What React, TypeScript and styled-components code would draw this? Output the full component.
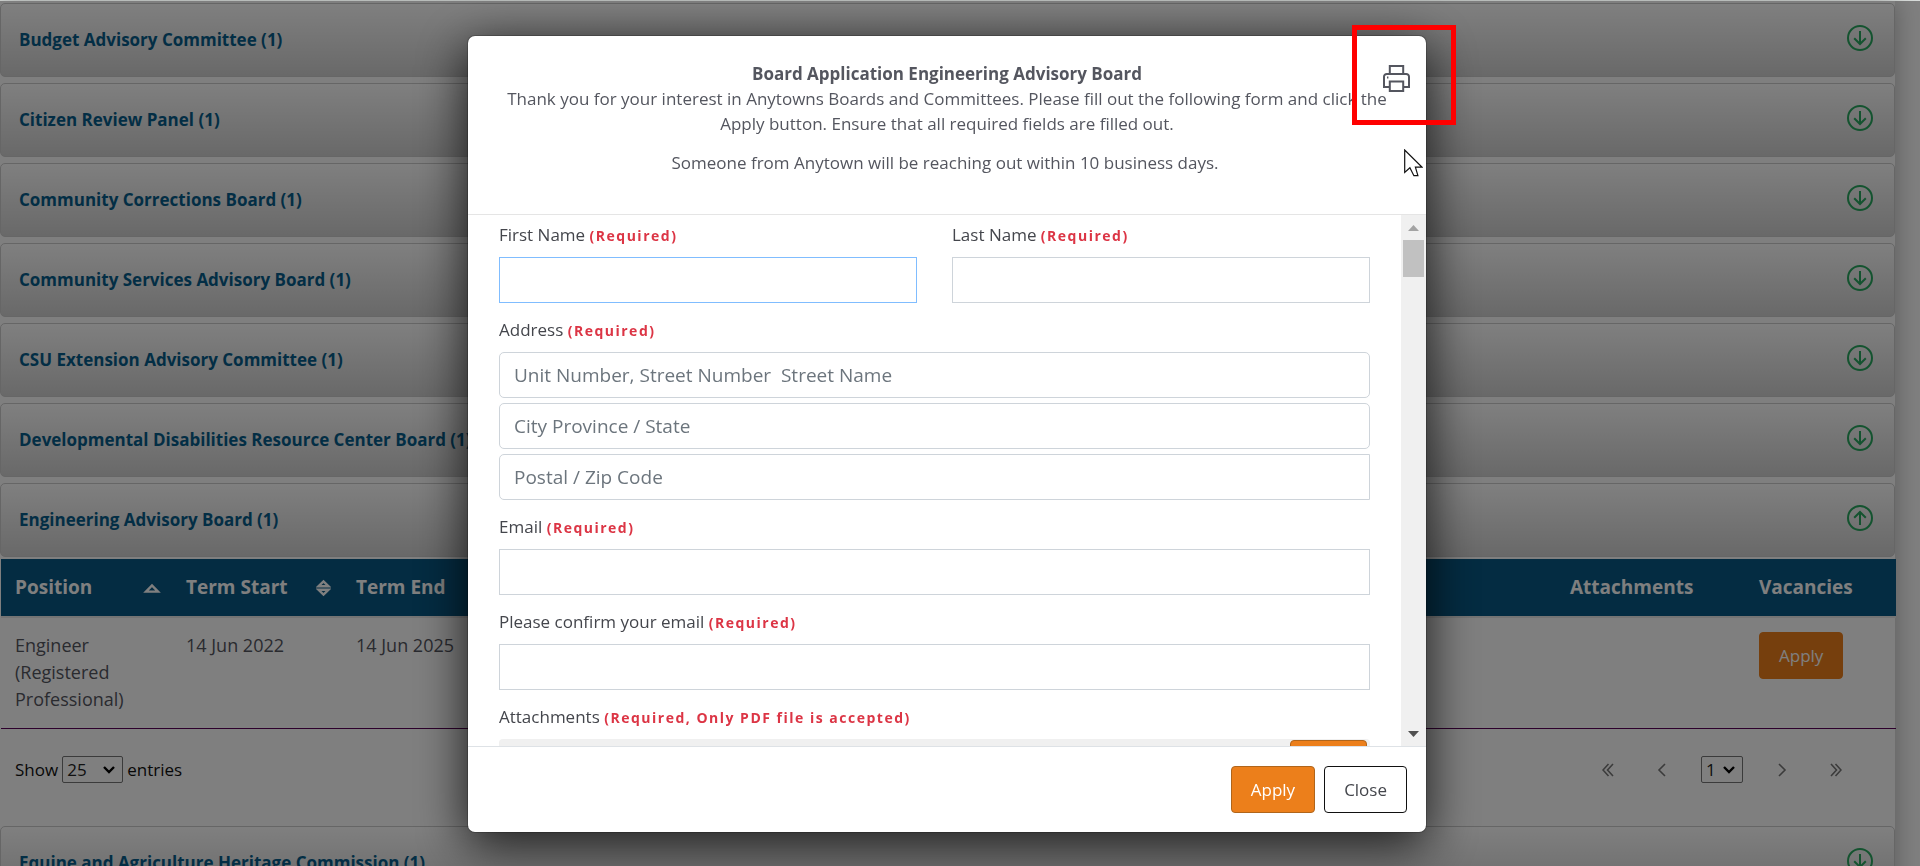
import React from 'react';
import styled, { createGlobalStyle, css } from 'styled-components';

const GlobalStyle = createGlobalStyle`
  *, *::before, *::after { box-sizing: border-box; }
  html, body { height: 100%; margin: 0; overflow: hidden; }
  body {
    background: #fff;
    color: #54565f;
    font-family: "Open Sans", "Noto Sans", sans-serif;
    font-size: 17px;
    line-height: 25px;
  }
  button, input, select { font-family: inherit; font-size: inherit; }
`;

/* ---------- Page behind the dialog ---------- */

const Page = styled.main`
  border-top: 1px solid #d8dcda;
  padding-right: 25px;
`;

const Content = styled.div`
  display: flex;
  flex-direction: column;
  gap: 6px;
  padding-top: 2px;
  background: #fff;
  box-shadow: 0 0 24px rgba(0, 0, 0, 0.3);
`;

const Board = styled.section``;

const BoardHeader = styled.button`
  display: flex;
  align-items: center;
  justify-content: space-between;
  width: 100%;
  height: 74px;
  padding: 0 21px 2px 18px;
  border: 1px solid #ccc;
  border-radius: 5px;
  background: linear-gradient(#fff, #d2d2d2);
  color: #065d8a;
  font-weight: 660;
  text-align: left;
  cursor: pointer;
`;

const ToggleIcon = styled.svg<{ $open?: boolean }>`
  width: 26px;
  height: 26px;
  margin-bottom: 2px;
  fill: none;
  stroke: #28a75f;
  stroke-width: 2;
  transform: ${(p) => (p.$open ? 'rotate(180deg)' : 'none')};
`;

const VacancyTable = styled.table`
  width: 100%;
  margin: 2px 0 0 1px;
  border-collapse: collapse;
  border-bottom: 1px solid #5a0058;
  table-layout: fixed;
  font-size: 18px;
  line-height: 27px;
`;

const HeadCell = styled.th`
  height: 58px;
  padding: 0 11px 0 14px;
  background: #085884;
  color: #fff;
  font-size: 19px;
  font-weight: 700;
  text-align: left;
`;

const HeadContent = styled.div`
  display: flex;
  align-items: center;
  justify-content: space-between;
`;

const Cell = styled.td`
  padding: 14px 14px 15px;
  border-top: 2px solid #e8e8e8;
  vertical-align: top;
`;

const SortIcon = styled.svg`
  fill: none;
  stroke: #fff;
  stroke-width: 2.4;
`;

const TableFooter = styled.div`
  display: flex;
  align-items: center;
  justify-content: space-between;
  height: 91px;
  padding: 0 32px 10px 15px;
  color: #111;
`;

const EntriesLabel = styled.label`
  display: flex;
  align-items: center;
  gap: 4px;
`;

const SelectBox = styled.span`
  position: relative;
  display: flex;

  svg {
    position: absolute;
    top: 10px;
    right: 8px;
    fill: none;
    stroke: #000;
    stroke-width: 2.4;
    pointer-events: none;
  }
`;

const Select = styled.select<{ $wide?: boolean }>`
  appearance: none;
  width: ${(p) => (p.$wide ? 61 : 42)}px;
  height: 27px;
  padding: 0 4px;
  border: 1px solid #767676;
  border-radius: 2px;
  background: transparent;
  color: #222;
`;

const Pager = styled.nav`
  display: flex;
  align-items: center;
`;

const PagerCurrent = styled.div`
  margin: 0 12px;
`;

const PageButton = styled.button`
  display: flex;
  justify-content: center;
  width: 54px;
  padding: 8px 0;
  border: 0;
  background: none;
  cursor: pointer;

  svg { fill: none; stroke: #777; stroke-width: 1.6; }
`;

/* ---------- Buttons ---------- */

const Button = styled.button<{ $outline?: boolean; $flat?: boolean }>`
  height: 47px;
  padding: 0 19px;
  border: 1px solid #b0651b;
  border-radius: 4px;
  background: #ec7f1b;
  color: #fff;
  font-size: 17px;
  cursor: pointer;

  ${(p) => p.$flat && css`border-color: #ec7f1b;`}
  ${(p) => p.$outline && css`
    border-color: #111;
    background: #fff;
    color: #44464c;
  `}
`;

/* ---------- Dialog ---------- */

const Overlay = styled.div`
  position: fixed;
  inset: 1px 0 0 0;
  display: flex;
  justify-content: center;
  padding: 34px 26px 33px 0;
  background: rgba(0, 0, 0, 0.5);
`;

const Dialog = styled.div`
  position: relative;
  display: flex;
  flex-direction: column;
  width: 960px;
  max-width: 100%;
  border: 1px solid rgba(0, 0, 0, 0.2);
  border-radius: 8px;
  background: #fff;
  background-clip: padding-box;
  box-shadow: 0 12px 50px rgba(0, 0, 0, 0.8);
`;

const DialogHeader = styled.header`
  padding: 25px 30px 39px;
  border-bottom: 1px solid #e5e5e5;
  text-align: center;
`;

const DialogTitle = styled.h2`
  margin: 0;
  font-size: 17px;
  line-height: 25px;
  font-weight: 700;
`;

const Intro = styled.p`
  margin: 0 0 14px;

  &:last-child { margin: 0 4px 0 0; }
`;

const PrintButton = styled.button`
  position: absolute;
  top: 29px;
  right: 16px;
  display: flex;
  padding: 0;
  border: 0;
  background: none;
  cursor: pointer;

  svg { fill: none; stroke: #54565f; stroke-width: 2; }
`;

const DialogBody = styled.div`
  display: flex;
  flex: 1;
  min-height: 0;
`;

const Form = styled.form`
  display: flex;
  flex: 1;
  flex-direction: column;
  gap: 14px;
  padding: 7px 31px 0;
  overflow-y: auto;
  scrollbar-width: none;
`;

const FieldPair = styled.div`
  display: grid;
  grid-template-columns: 1fr 1fr;
  gap: 35px;
`;

const Field = styled.div`
  display: flex;
  flex-direction: column;
  gap: 5px;
`;

const Label = styled.label`
  margin-bottom: 4px;
  color: #44464c;
  line-height: 26px;
`;

const Required = styled.span`
  color: #dc3545;
  font-size: 14px;
  font-weight: 700;
  letter-spacing: 1.5px;
  line-height: 14px;
`;

const TextInput = styled.input<{ $active?: boolean; $corners?: string }>`
  width: 100%;
  height: 46px;
  padding: 0 14px;
  border: 1px solid ${(p) => (p.$active ? '#80bdff' : '#ced4da')};
  border-radius: ${(p) => p.$corners || '0'};
  background: #fff;
  color: #495057;
  font-size: 19px;
  outline: none;

  &::placeholder { color: #6c757d; opacity: 1; }
`;

const UploadBox = styled.div`
  display: flex;
  justify-content: flex-end;
  padding: 1px 3px;
  border-radius: 4px;
  background: #f0f0f0;
`;

const BrowseButton = styled(Button)`
  width: 77px;
  padding: 0;
`;

const ScrollBar = styled.div`
  display: flex;
  flex-direction: column;
  align-items: center;
  justify-content: space-between;
  width: 25px;
  background: #f0f0f0;
`;

const ScrollTop = styled.div`
  display: flex;
  flex-direction: column;
`;

const ScrollArrow = styled.span`
  display: flex;
  align-items: center;
  justify-content: center;
  height: 25px;
`;

const ScrollThumb = styled.div`
  width: 21px;
  height: 37px;
  background: #c1c1c1;
`;

const DialogFooter = styled.footer`
  display: flex;
  justify-content: flex-end;
  gap: 9px;
  padding: 19px;
  border-top: 1px solid #dee2e6;
`;

const Highlight = styled.div`
  position: absolute;
  top: -11px;
  right: -30px;
  width: 104px;
  height: 100px;
  border: 5px solid #f00;
  pointer-events: none;
`;

const Pointer = styled.svg`
  position: absolute;
  top: 113px;
  right: 3px;
  pointer-events: none;
`;

/* ---------- Icons ---------- */

const ArrowCircle = ({ open }: { open?: boolean }) => (
  <ToggleIcon $open={open} viewBox="0 0 26 26" aria-hidden="true">
    <circle cx="13" cy="13" r="12" />
    <path d="M13 6v13M7.2 13.2l5.8 5.8 5.8-5.8" />
  </ToggleIcon>
);

const SortAscending = () => (
  <SortIcon width="18" height="10" viewBox="0 0 18 10" aria-hidden="true">
    <path d="M3 8.6 9 2.4l6 6.2z" />
  </SortIcon>
);

const SortBoth = () => (
  <SortIcon width="15" height="18" viewBox="0 0 15 18" aria-hidden="true">
    <path d="M2.6 7.2 7.5 2.4l4.9 4.8zM2.6 10.8h9.8l-4.9 4.8z" />
  </SortIcon>
);

const SelectChevron = () => (
  <svg width="12" height="8" viewBox="0 0 12 8" aria-hidden="true">
    <path d="m1 1 5 5 5-5" />
  </svg>
);

const PrinterIcon = () => (
  <svg width="27" height="27" viewBox="0 0 27 27" aria-hidden="true">
    <path d="M6.8 9V1h13.4v8" />
    <path d="M6.8 22H1V11.8A2.8 2.8 0 0 1 3.8 9h19.4a2.8 2.8 0 0 1 2.8 2.8V22h-5.8" />
    <path d="M6.8 16.4h13.4V26H6.8z" />
    <path d="M4 12.4h1.4" />
  </svg>
);

const Chevrons = ({ d }: { d: string }) => (
  <svg width="12" height="14" viewBox="0 0 12 14" aria-hidden="true">
    <path d={d} />
  </svg>
);

/* ---------- Data ---------- */

const closedBoards = [
  'Budget Advisory Committee (1)',
  'Citizen Review Panel (1)',
  'Community Corrections Board (1)',
  'Community Services Advisory Board (1)',
  'CSU Extension Advisory Committee (1)',
  'Developmental Disabilities Resource Center Board (1)',
];

const BoardRow = ({ name, open, children }: { name: string; open?: boolean; children?: React.ReactNode }) => (
  <Board>
    <BoardHeader type="button" aria-expanded={!!open}>
      {name}
      <ArrowCircle open={open} />
    </BoardHeader>
    {children}
  </Board>
);

const FieldLabel = ({ id, text, note = '(Required)' }: { id: string; text: string; note?: string }) => (
  <Label htmlFor={id}>
    {text} <Required>{note}</Required>
  </Label>
);

const SimpleField = ({ id, text, type = 'text', active }: { id: string; text: string; type?: string; active?: boolean }) => (
  <Field>
    <FieldLabel id={id} text={text} />
    <TextInput id={id} type={type} $active={active} />
  </Field>
);

const Vacancies = () => (
  <>
    <VacancyTable>
      <colgroup>
        <col width="171" />
        <col width="170" />
        <col width="170" />
        <col />
        <col width="189" />
        <col width="151" />
      </colgroup>
      <thead>
        <tr>
          <HeadCell scope="col"><HeadContent>Position <SortAscending /></HeadContent></HeadCell>
          <HeadCell scope="col"><HeadContent>Term Start <SortBoth /></HeadContent></HeadCell>
          <HeadCell scope="col"><HeadContent>Term End <SortBoth /></HeadContent></HeadCell>
          <HeadCell as="td" />
          <HeadCell scope="col">Attachments</HeadCell>
          <HeadCell scope="col">Vacancies</HeadCell>
        </tr>
      </thead>
      <tbody>
        <tr>
          <Cell>Engineer (Registered Professional)</Cell>
          <Cell>14 Jun 2022</Cell>
          <Cell>14 Jun 2025</Cell>
          <Cell />
          <Cell />
          <Cell><Button type="button" $flat>Apply</Button></Cell>
        </tr>
      </tbody>
    </VacancyTable>
    <TableFooter>
      <EntriesLabel>
        Show
        <SelectBox>
          <Select $wide defaultValue="25">
            <option>25</option>
            <option>50</option>
          </Select>
          <SelectChevron />
        </SelectBox>
        entries
      </EntriesLabel>
      <Pager aria-label="Pages">
        <PageButton type="button" aria-label="First page"><Chevrons d="M6.5 1 1 7l5.500 6M11 1 5.500 7 11 13" /></PageButton>
        <PageButton type="button" aria-label="Previous page"><Chevrons d="M9 1 3 7l6 6" /></PageButton>
        <PagerCurrent>
          <SelectBox>
            <Select aria-label="Page" defaultValue="1">
              <option>1</option>
            </Select>
            <SelectChevron />
          </SelectBox>
        </PagerCurrent>
        <PageButton type="button" aria-label="Next page"><Chevrons d="m3 1 6 6-6 6" /></PageButton>
        <PageButton type="button" aria-label="Last page"><Chevrons d="m1 1 5.500 6L1 13M5.500 1 11 7l-5.500 6" /></PageButton>
      </Pager>
    </TableFooter>
  </>
);

export default function App() {
  return (
    <>
      <GlobalStyle />
      <Page>
        <Content>
          {closedBoards.map((name) => <BoardRow key={name} name={name} />)}
          <BoardRow name="Engineering Advisory Board (1)" open>
            <Vacancies />
          </BoardRow>
          <BoardRow name="Equine and Agriculture Heritage Commission (1)" />
        </Content>
      </Page>

      <Overlay>
        <Dialog role="dialog" aria-modal="true" aria-labelledby="dialog-title">
          <DialogHeader>
            <DialogTitle id="dialog-title">Board Application Engineering Advisory Board</DialogTitle>
            <Intro>
              Thank you for your interest in Anytowns Boards and Committees. Please fill out the following form and
              click the Apply button. Ensure that all required fields are filled out.
            </Intro>
            <Intro>Someone from Anytown will be reaching out within 10 business days.</Intro>
          </DialogHeader>
          <PrintButton type="button" aria-label="Print"><PrinterIcon /></PrintButton>

          <DialogBody>
            <Form id="application">
              <FieldPair>
                <SimpleField id="first-name" text="First Name" active />
                <SimpleField id="last-name" text="Last Name" />
              </FieldPair>
              <Field>
                <FieldLabel id="street" text="Address" />
                <TextInput id="street" placeholder={'Unit Number, Street Number  Street Name'} $corners="5px" />
                <TextInput aria-label="City Province / State" placeholder="City Province / State" $corners="5px" />
                <TextInput aria-label="Postal / Zip Code" placeholder="Postal / Zip Code" $corners="5px 0 0 5px" />
              </Field>
              <SimpleField id="email" text="Email" type="email" />
              <SimpleField id="confirm-email" text="Please confirm your email" type="email" />
              <Field>
                <FieldLabel id="browse" text="Attachments" note="(Required, Only PDF file is accepted)" />
                <UploadBox>
                  <BrowseButton id="browse" type="button" aria-label="Browse" />
                </UploadBox>
              </Field>
            </Form>
            <ScrollBar aria-hidden="true">
              <ScrollTop>
                <ScrollArrow>
                  <svg width="11" height="6" viewBox="0 0 11 6"><path d="M0 6 5.500 0 11 6z" fill="#a3a3a3" /></svg>
                </ScrollArrow>
                <ScrollThumb />
              </ScrollTop>
              <ScrollArrow>
                <svg width="11" height="6" viewBox="0 0 11 6"><path d="M0 0h11L5.500 6z" fill="#505050" /></svg>
              </ScrollArrow>
            </ScrollBar>
          </DialogBody>

          <DialogFooter>
            <Button type="submit" form="application">Apply</Button>
            <Button type="button" $outline>Close</Button>
          </DialogFooter>

          <Highlight />
          <Pointer width="19" height="28" viewBox="0 0 19 28" aria-hidden="true">
            <path
              d="M.7 1v22.500l5.200-4.800 4 8h4l-2.500-8.600h6.500z"
              fill="#fff"
              stroke="#111"
              strokeWidth="1.200"
            />
          </Pointer>
        </Dialog>
      </Overlay>
    </>
  );
}
